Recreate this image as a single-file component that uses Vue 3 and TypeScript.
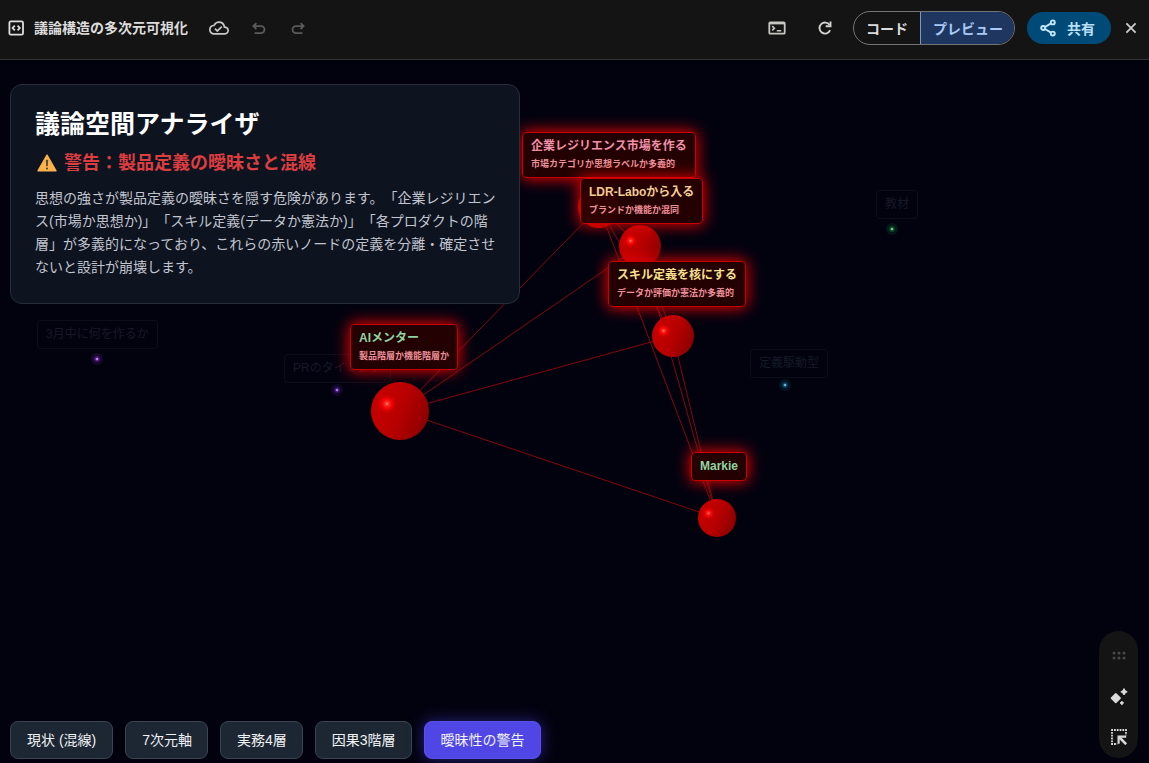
<script setup lang="ts">
import { ref } from 'vue'

interface Sphere {
  id: string
  x: number
  y: number
  r: number
}

interface Label {
  text: string
  sub?: string
  x: number
  y: number
  tone: 'green' | 'rose' | 'amber' | 'yellow'
}

interface Faded {
  text: string
  x: number
  y: number
  dotX: number
  dotY: number
  color: string
}

const spheres: Sphere[] = [
  { id: 'resilience', x: 599, y: 147, r: 21 },
  { id: 'labo', x: 640, y: 186, r: 21 },
  { id: 'skill', x: 673, y: 276, r: 21 },
  { id: 'markie', x: 717, y: 458, r: 19 },
  { id: 'mentor', x: 400, y: 351, r: 29 },
]

const links = spheres.flatMap((a, i) => spheres.slice(i + 1).map((b) => ({ key: a.id + b.id, a, b })))

const labels: Label[] = [
  { text: '企業レジリエンス市場を作る', sub: '市場カテゴリか思想ラベルか多義的', x: 522, y: 72, tone: 'rose' },
  { text: 'LDR-Laboから入る', sub: 'ブランドか機能か混同', x: 580, y: 118, tone: 'amber' },
  { text: 'スキル定義を核にする', sub: 'データか評価か憲法か多義的', x: 608, y: 201, tone: 'yellow' },
  { text: 'AIメンター', sub: '製品階層か機能階層か', x: 350, y: 264, tone: 'green' },
  { text: 'Markie', x: 691, y: 392, tone: 'green' },
]

const faded: Faded[] = [
  { text: '3月中に何を作るか', x: 37, y: 260, dotX: 97, dotY: 299, color: '#a23be0' },
  { text: 'PRのタイミング', x: 284, y: 294, dotX: 337, dotY: 330, color: '#7a35d0' },
  { text: '教材', x: 876, y: 130, dotX: 892, dotY: 169, color: '#22a346' },
  { text: '定義駆動型', x: 750, y: 289, dotX: 785, dotY: 325, color: '#1590b4' },
]

const views = ['現状 (混線)', '7次元軸', '実務4層', '因果3階層', '曖昧性の警告']
const active = ref('曖昧性の警告')
</script>

<template>
  <div class="app">
    <header class="bar">
      <div class="group left">
        <svg viewBox="0 0 16 16" width="16" height="16" fill="none" stroke="#dedede" stroke-width="1.8">
          <rect x="1.4" y="1.4" width="13.6" height="13.2" rx="1.4" />
          <path d="M6.800 5.600 4.600 8l2.200 2.400M9.600 5.600 11.800 8l-2.200 2.400" />
        </svg>
        <h1 class="doc-title">議論構造の多次元可視化</h1>
        <button class="icon" aria-label="保存済み">
          <svg viewBox="0 0 24 24" width="20" height="20" fill="#c8c8c8">
            <path d="M19.35 10.04A7.49 7.49 0 0 0 12 4C9.11 4 6.6 5.64 5.35 8.04A5.994 5.994 0 0 0 0 14c0 3.31 2.69 6 6 6h13c2.76 0 5-2.24 5-5 0-2.64-2.05-4.78-4.65-4.96zM19 18H6c-2.21 0-4-1.79-4-4 0-2.05 1.53-3.76 3.56-3.97l1.07-.11.5-.95A5.469 5.469 0 0 1 12 6c2.62 0 4.88 1.86 5.39 4.43l.3 1.5 1.53.11A2.98 2.98 0 0 1 22 15c0 1.65-1.35 3-3 3zm-9-3.82-2.09-2.09L6.5 13.5 10 17l6.01-6.01-1.41-1.41z" />
          </svg>
        </button>
        <button class="icon undo" aria-label="元に戻す" disabled>
          <svg viewBox="0 0 16 16" width="16" height="16" fill="none" stroke="#5a5a5a" stroke-width="1.8">
            <path d="M5.4 3.2 2.400 6.100l3 2.900M2.600 6.100H10a3.500 3.500 0 0 1 0 7H3.600" />
          </svg>
        </button>
        <button class="icon redo" aria-label="やり直す" disabled>
          <svg viewBox="0 0 16 16" width="16" height="16" fill="none" stroke="#5a5a5a" stroke-width="1.8">
            <path d="m10.600 3.200 3 2.900-3 2.900M13.400 6.100H6a3.500 3.500 0 0 0 0 7h6.400" />
          </svg>
        </button>
      </div>
      <div class="group right">
        <button class="icon" aria-label="コンソール">
          <svg viewBox="0 0 18 14" width="18" height="14" fill="none" stroke="#c6c6c2" stroke-width="1.8">
            <rect x="1.3" y="1.3" width="15.4" height="11.4" rx="1" />
            <path d="M1.3 2.4h15.4" stroke-width="2" />
            <path d="m4.2 5.1 2.2 2.1-2.2 2.1M8.8 9.7h4.4" stroke-width="1.6" />
          </svg>
        </button>
        <button class="icon reload" aria-label="再読み込み">
          <svg viewBox="0 0 14 14" width="14" height="14" fill="none" stroke="#d2d2d0" stroke-width="1.9">
            <path d="M12.100 9.200A5.500 5.500 0 1 1 11.600 4" />
            <path d="M12.500 .4v4.900H7.700" />
          </svg>
        </button>
        <div class="switch">
          <button>コード</button>
          <button class="on">プレビュー</button>
        </div>
        <button class="share">
          <svg viewBox="0 0 16 18" width="16" height="18" fill="none" stroke="#c4e8fb" stroke-width="1.9">
            <circle cx="12.8" cy="3.4" r="2" />
            <circle cx="3.2" cy="9" r="2" />
            <circle cx="12.8" cy="14.6" r="2" />
            <path d="m5 8 6-3.600M5 10l6 3.600" />
          </svg>
          共有
        </button>
        <button class="icon" aria-label="閉じる">
          <svg viewBox="0 0 12 12" width="12" height="12" fill="none" stroke="#cfcfcf" stroke-width="1.8">
            <path d="m1.400 1.400 9.200 9.200M10.600 1.400l-9.200 9.200" />
          </svg>
        </button>
      </div>
    </header>

    <main class="stage">
      <div class="space">
        <svg class="graph" width="100%" height="100%">
          <defs>
            <linearGradient id="ball" x1="0" y1="0.3" x2="1" y2="0.7">
              <stop offset="0" stop-color="#c80000" />
              <stop offset="0.5" stop-color="#b80000" />
              <stop offset="1" stop-color="#8a0000" />
            </linearGradient>
            <radialGradient id="shine">
              <stop offset="0" stop-color="#ffa090" />
              <stop offset="0.15" stop-color="#ff3c30" />
              <stop offset="0.4" stop-color="#ff0808" />
              <stop offset="1" stop-color="#e00000" stop-opacity="0" />
            </radialGradient>
          </defs>
          <line v-for="l in links" :key="l.key" :x1="l.a.x" :y1="l.a.y" :x2="l.b.x" :y2="l.b.y" stroke="#86060e" />
          <g v-for="s in spheres" :key="s.id">
            <circle :cx="s.x" :cy="s.y" :r="s.r" fill="url(#ball)" />
            <circle :cx="s.x - s.r * 0.45" :cy="s.y - s.r * 0.25" :r="s.r * 0.34" fill="url(#shine)" />
          </g>
          <g v-for="f in faded" :key="f.text">
            <circle :cx="f.dotX" :cy="f.dotY" r="6" :fill="f.color" opacity=".13" />
            <circle :cx="f.dotX" :cy="f.dotY" r="3" :fill="f.color" opacity=".3" />
            <circle :cx="f.dotX" :cy="f.dotY" r="1.6" :fill="f.color" />
            <circle :cx="f.dotX" :cy="f.dotY" r=".8" fill="#d8e4f0" />
          </g>
        </svg>
        <div v-for="f in faded" :key="f.text" class="node faded" :style="{ left: f.x + 'px', top: f.y + 'px' }">{{ f.text }}</div>
        <div v-for="n in labels" :key="n.text" class="node warn" :class="n.tone" :style="{ left: n.x + 'px', top: n.y + 'px' }">
          {{ n.text }}
          <small v-if="n.sub">{{ n.sub }}</small>
        </div>
      </div>

      <section class="card">
        <h2>議論空間アナライザ</h2>
        <h3>
          <svg viewBox="0 0 20 18" width="20" height="18" aria-hidden="true">
            <path d="M10 1.2 19 16.8H1z" fill="#fbb24c" stroke="#fbb24c" stroke-width="1.4" stroke-linejoin="round" />
            <path d="M9.300 6h1.400l-.3 6h-.8z" fill="#3d3a3c" stroke="#3d3a3c" stroke-width=".6" />
            <circle cx="10" cy="14.4" r="1" fill="#3d3a3c" />
          </svg>
          警告：製品定義の曖昧さと混線
        </h3>
        <p>思想の強さが製品定義の曖昧さを隠す危険があります。「企業レジリエンス(市場か思想か)」「スキル定義(データか憲法か)」「各プロダクトの階層」が多義的になっており、これらの赤いノードの定義を分離・確定させないと設計が崩壊します。</p>
      </section>

      <nav class="views">
        <button v-for="v in views" :key="v" :class="{ active: v === active }" @click="active = v">{{ v }}</button>
      </nav>

      <aside class="tools">
        <svg class="grip" viewBox="0 0 14 10" width="14" height="10" fill="#484848">
          <circle v-for="i in 6" :key="i" :cx="2 + ((i - 1) % 3) * 5" :cy="i > 3 ? 7 : 2" r="1.5" />
        </svg>
        <button class="icon" aria-label="AI 編集">
          <svg viewBox="0 0 18 18" width="18" height="18" fill="#dcdcdc" stroke="#dcdcdc" stroke-linejoin="round">
            <path d="m5.800 5.800 4.300 4.300-4.300 4.300-4.300-4.300z" stroke-width="1.600" />
            <path d="M14 .6q.7 2.500 3.200 3.200-2.500.7-3.200 3.200-.7-2.500-3.200-3.200 2.500-.7 3.200-3.200z" stroke-width="1" />
            <path d="m11.900 13.300 1.700 1.700-1.700 1.700-1.700-1.700z" stroke-width="1" />
          </svg>
        </button>
        <button class="icon" aria-label="領域を選択">
          <svg viewBox="0 0 16 16" width="16" height="16" fill="none" stroke="#d8d8d8">
            <path d="M.2 1h15.600M1 .2v15.600M.2 15h6M15 .2v6" stroke-width="1.800" stroke-dasharray="1.800 1" />
            <path d="M7.600 14.800V7.600h7.600" stroke-width="2.200" />
            <path d="m8 8 7.200 7.200" stroke-width="2.600" />
          </svg>
        </button>
      </aside>
    </main>
  </div>
</template>

<style>
body {
  margin: 0;
  background: #02020f;
}
</style>

<style scoped>
.app {
  display: flex;
  flex-direction: column;
  min-height: 100vh;
  font-family: "Liberation Sans", "Noto Sans CJK JP", sans-serif;
  color: #fff;
}
button {
  margin: 0;
  padding: 0;
  border: 0;
  background: none;
  color: inherit;
  font: inherit;
  cursor: pointer;
}
svg {
  display: block;
}
.bar {
  display: flex;
  align-items: center;
  justify-content: space-between;
  box-sizing: border-box;
  height: 60px;
  padding: 0 12px 4px 8px;
  border-bottom: 1px solid #343436;
  background: #141414;
}
.group {
  display: flex;
  align-items: center;
}
.doc-title {
  margin: 0 21px 0 10px;
  font-size: 14px;
  line-height: 20px;
  font-weight: 700;
  color: #dcdcdc;
}
.undo {
  margin-left: 22px;
}
.redo {
  margin-left: 23px;
}
.reload {
  margin: 0 21px 0 32px;
}
.switch {
  display: flex;
  box-sizing: border-box;
  height: 34px;
  border: 1px solid #747474;
  border-radius: 17px;
  overflow: hidden;
  font-size: 14px;
  font-weight: 700;
  color: #dcdcdc;
}
.switch button {
  padding: 0 12px;
}
.switch .on {
  padding-right: 11px;
  border-left: 1px solid #8296b8;
  background: #1f3760;
  color: #a9c8f4;
}
.share {
  display: flex;
  align-items: center;
  gap: 11px;
  height: 32px;
  margin: 0 14px 0 12px;
  padding: 0 16px 0 13px;
  border-radius: 16px;
  background: #004a77;
  color: #b8def6;
  font-size: 14px;
  font-weight: 700;
}
.stage {
  position: relative;
  flex: 1;
  display: flex;
  flex-direction: column;
  align-items: flex-start;
  justify-content: space-between;
  padding: 24px 10px 4px;
  overflow: hidden;
}
.space {
  position: absolute;
  inset: 0;
}
.graph {
  position: absolute;
  inset: 0;
}
.node {
  position: absolute;
  padding: 5px 8px;
  border: 1px solid;
  border-radius: 4px;
  font-size: 12px;
  line-height: 17px;
  white-space: nowrap;
}
.faded {
  border-color: #0a0e1a;
  color: #151a26;
}
.warn {
  border-color: #c80000;
  background: rgba(38, 0, 0, 0.93);
  box-shadow: 0 0 15px 1px #e80000;
  font-weight: 700;
}
.warn small {
  display: block;
  font-size: 9px;
  line-height: 19px;
  margin-bottom: -2px;
  color: #ee929a;
}
.rose {
  color: #f090a8;
}
.amber {
  color: #f0cc94;
}
.yellow {
  color: #f6e08c;
}
.green {
  color: #90d4a0;
}
.card {
  position: relative;
  box-sizing: border-box;
  width: 510px;
  max-width: 100%;
  padding: 24px 20px 24px 24px;
  border: 1px solid #272e39;
  border-radius: 12px;
  background: #0e1320;
}
.card h2 {
  margin: 0;
  font-size: 25px;
  line-height: 30px;
  font-weight: 700;
}
.card h3 {
  display: flex;
  align-items: center;
  gap: 7px;
  margin: 8px 0;
  padding-left: 2px;
  font-size: 18px;
  line-height: 32px;
  font-weight: 700;
  color: #dc3e40;
}
.card p {
  margin: 0;
  font-size: 14px;
  line-height: 23px;
  color: #c0c5ce;
  text-spacing-trim: space-all;
}
.views {
  position: relative;
  display: flex;
  flex-wrap: wrap;
  gap: 12px;
}
.views button {
  box-sizing: border-box;
  height: 38px;
  padding: 0 16px 2px;
  border: 1px solid #3b4551;
  border-radius: 8px;
  background: #1c2733;
  color: #f0f2f4;
  font-size: 14px;
}
.views button:not(:first-child) {
  padding-right: 15px;
}
.views .active {
  border-color: #5850ec;
  background: #4f46e5;
  box-shadow: 0 0 15px rgba(79, 70, 229, 0.5);
}
.tools {
  position: absolute;
  right: 11px;
  bottom: 5px;
  display: flex;
  flex-direction: column;
  align-items: center;
  box-sizing: border-box;
  width: 39px;
  padding: 20px 0 13px;
  gap: 23px;
  border-radius: 20px;
  background: #141414;
}
.grip {
  margin-bottom: 4px;
}
</style>
